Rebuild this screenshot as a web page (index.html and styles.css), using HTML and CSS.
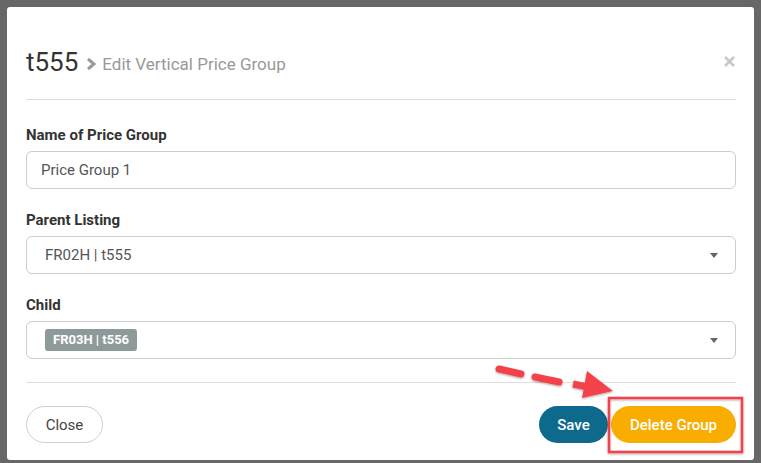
FILE: index.html
```html
<!DOCTYPE html>
<html>
<head>
<meta charset="utf-8">
<link rel="stylesheet" href="styles.css">
</head>
<body>
<div class="modal">
  <div class="modal-header">
    <div class="title">
      <span class="title-main">t555</span>
      <svg class="chev" width="10" height="14" viewBox="0 0 10 14"><path d="M2 2 L8 7 L2 12" fill="none" stroke="#999" stroke-width="3" stroke-linejoin="miter"/></svg>
      <span class="title-sub">Edit Vertical Price Group</span>
    </div>
    <svg class="close-x" width="11" height="11" viewBox="0 0 11 11"><path d="M1 1 L10 10 M10 1 L1 10" stroke="#c8c8c8" stroke-width="2.6"/></svg>
  </div>
  <div class="modal-body">
    <div class="field">
      <div class="label">Name of Price Group</div>
      <div class="control input">Price Group 1</div>
    </div>
    <div class="field">
      <div class="label">Parent Listing</div>
      <div class="control select"><span>FR02H | t555</span><span class="caret"></span></div>
    </div>
    <div class="field">
      <div class="label">Child</div>
      <div class="control select multi"><span class="tag">FR03H | t556</span><span class="caret"></span></div>
    </div>
  </div>
  <div class="modal-footer">
    <button class="btn btn-close">Close</button>
    <div class="actions">
      <button class="btn btn-save">Save</button>
      <button class="btn btn-delete">Delete Group</button>
    </div>
  </div>
</div>
<svg class="annot" width="761" height="463" viewBox="0 0 761 463">
  <defs>
    <filter id="sh" x="-20%" y="-20%" width="140%" height="140%">
      <feDropShadow dx="0" dy="1" stdDeviation="1.2" flood-color="#000" flood-opacity="0.35"/>
    </filter>
  </defs>
  <g filter="url(#sh)">
    <rect x="609" y="398" width="133" height="54" fill="none" stroke="#f0434b" stroke-width="2.5"/>
    <g stroke="#f4434b" stroke-width="7" stroke-linecap="round">
      <line x1="499" y1="369" x2="521" y2="374"/>
      <line x1="535" y1="377" x2="559" y2="382"/>
    </g>
    <line x1="573" y1="384" x2="588" y2="387" stroke="#f4434b" stroke-width="7" stroke-linecap="butt"/>
    <polygon points="587,371 613,391 582,398" fill="#f4434b"/>
  </g>
</svg>
</body>
</html>
```
FILE: styles.css
```css
* { box-sizing: border-box; }
html, body { margin: 0; padding: 0; }
body {
  width: 761px;
  height: 463px;
  background: #676767;
  font-family: Roboto, "Liberation Sans", sans-serif;
  overflow: hidden;
  position: relative;
}
.modal {
  margin: 7px 0 0 7px;
  width: 747px;
  background: #fff;
  border-radius: 3px;
  padding: 0 18px 0 19px;
}
.modal-header {
  display: flex;
  align-items: center;
  justify-content: space-between;
  padding: 40px 0 22px;
  border-bottom: 1px solid #dedede;
  height: 93px;
}
.title {
  display: flex;
  align-items: center;
  height: 30px;
}
.title-main {
  font-size: 26px;
  color: #333;
  line-height: 30px;
}
.chev { margin: 4px 6px 0 8px; }
.title-sub {
  font-size: 17px;
  color: #999;
  line-height: 30px;
  margin-top: 4px;
}
.close-x { margin-right: 1px; margin-top: -2px; }
.modal-body {
  padding: 25px 0 23px;
  border-bottom: 1px solid #dedede;
}
.field + .field { margin-top: 21px; }
.label {
  font-size: 15px;
  font-weight: 700;
  color: #333;
  line-height: 20px;
  margin-bottom: 6px;
}
.control {
  height: 38px;
  border: 1px solid #cccccc;
  border-radius: 6px;
  display: flex;
  align-items: center;
  font-size: 15px;
  color: #555;
}
.input { padding-left: 14px; }
.select { padding-left: 18px; padding-right: 17px; justify-content: space-between; }
.caret {
  width: 0; height: 0;
  border-left: 4.5px solid transparent;
  border-right: 4.5px solid transparent;
  border-top: 5px solid #666;
  margin-top: 1px;
}
.tag {
  background: #8e9a9a;
  color: #fff;
  font-size: 13px;
  font-weight: 700;
  height: 22px;
  line-height: 22px;
  padding: 0 8px;
  border-radius: 3px;
}
.modal-footer {
  display: flex;
  justify-content: space-between;
  align-items: center;
  padding: 23px 0 17px;
}
.actions { display: flex; gap: 3px; }
.btn {
  height: 37px;
  border-radius: 19px;
  font-family: Roboto, "Liberation Sans", sans-serif;
  font-size: 15px;
  border: none;
  padding: 0;
  cursor: pointer;
}
.btn-close {
  width: 77px;
  background: #fff;
  border: 1px solid #cfcfcf;
  color: #444;
}
.btn-save {
  width: 69px;
  background: #0e6a8c;
  color: #fff;
  font-weight: 500;
}
.btn-delete {
  width: 125px;
  background: #f9ad00;
  color: #fff;
  font-weight: 500;
}
.annot {
  position: absolute;
  left: 0;
  top: 0;
  pointer-events: none;
}
```
